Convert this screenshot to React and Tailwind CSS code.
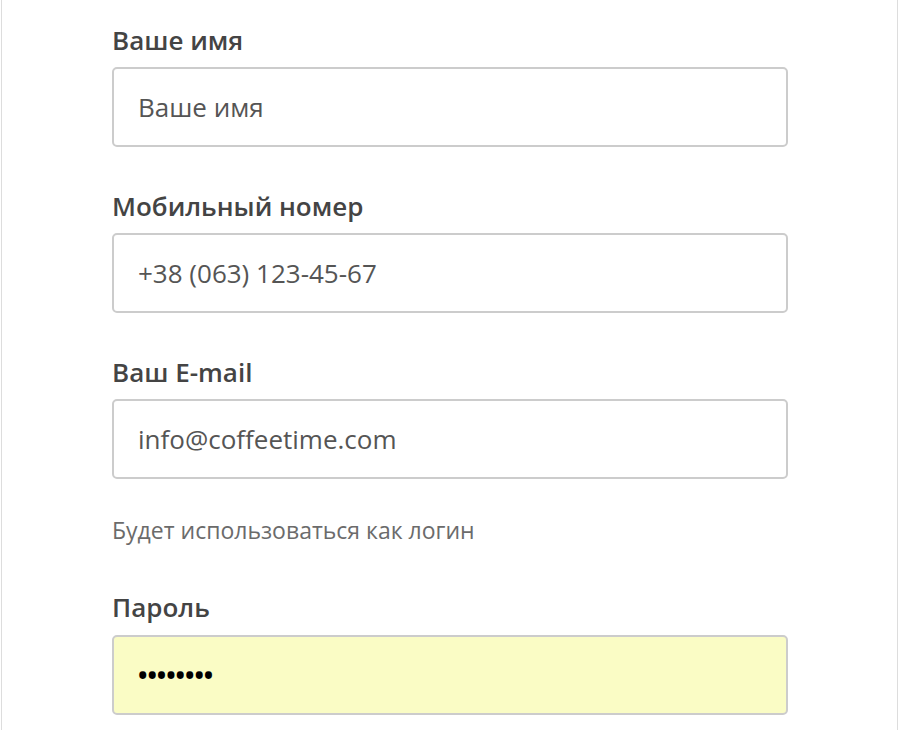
import React from "react";

function Field({ label, children }) {
  return (
    <div className="flex flex-col">
      <label className="text-[26px] leading-[30px] font-semibold text-[#444444]">{label}</label>
      {children}
    </div>
  );
}

const inputCls =
  "mt-[12px] h-[80px] w-full rounded-[5px] border-2 border-[#cccccc] px-[24px] flex items-center text-[26px] text-[#555555]";

export default function App() {
  return (
    <div className="w-[899px] h-[730px] bg-white overflow-hidden" style={{ fontFamily: '"Open Sans", sans-serif' }}>
      <div className="ml-[1px] w-[897px] h-full border-l border-r border-[#dddddd] pt-[25px] pl-[110px] pr-[109px]">
        <Field label="Ваше имя">
          <div className={inputCls}>Ваше имя</div>
        </Field>
        <div className="mt-[44px]">
          <Field label="Мобильный номер">
            <div className={inputCls}>+38 (063) 123-45-67</div>
          </Field>
        </div>
        <div className="mt-[44px]">
          <Field label="Ваш E-mail">
            <div className={inputCls}>info@coffeetime.com</div>
          </Field>
        </div>
        <p className="mt-[37px] text-[23px] leading-[28px] text-[#6b6b6b]">Будет использоваться как логин</p>
        <div className="mt-[48px]">
          <Field label="Пароль">
            <div className={inputCls + " mt-[13px] bg-[#fafcc5] text-black"}>
              <span className="text-[25px] font-bold">••••••••</span>
            </div>
          </Field>
        </div>
      </div>
    </div>
  );
}
